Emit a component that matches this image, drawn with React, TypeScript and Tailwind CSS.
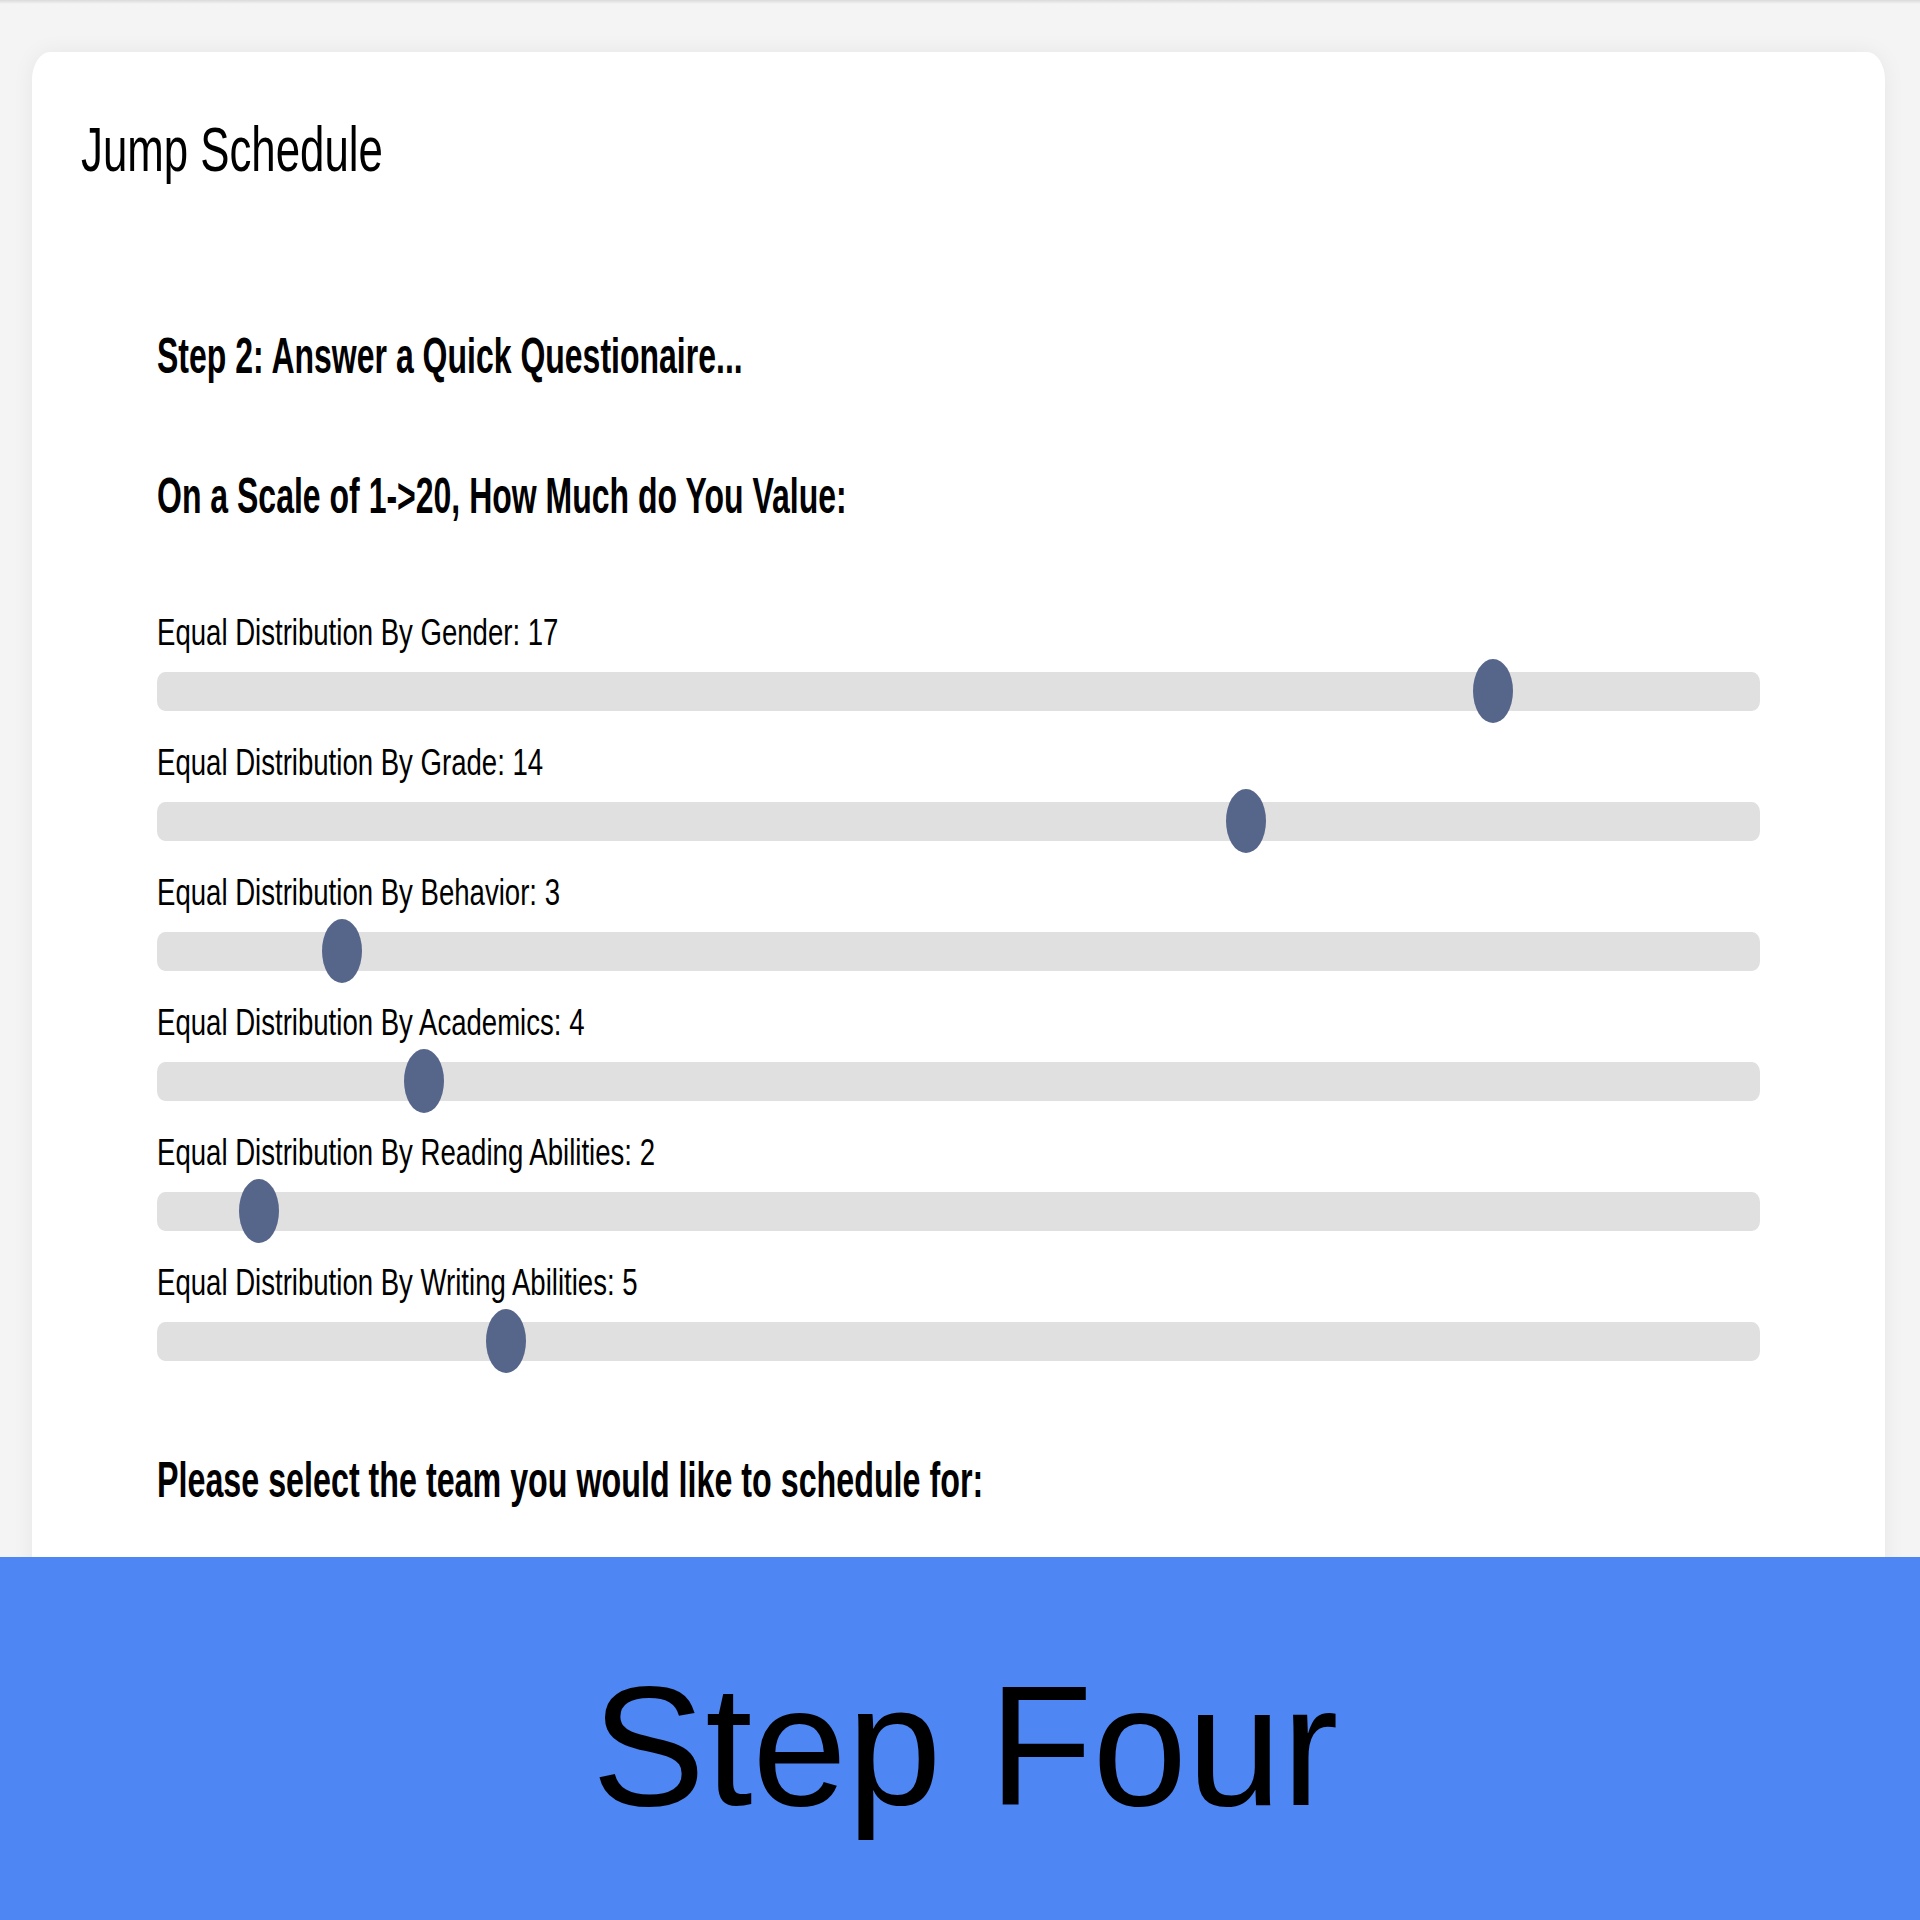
import React from 'react';

const questions = [
  { label: 'Equal Distribution By Gender', value: 17 },
  { label: 'Equal Distribution By Grade', value: 14 },
  { label: 'Equal Distribution By Behavior', value: 3 },
  { label: 'Equal Distribution By Academics', value: 4 },
  { label: 'Equal Distribution By Reading Abilities', value: 2 },
  { label: 'Equal Distribution By Writing Abilities', value: 5 },
];

const MIN = 1;
const MAX = 20;

function SliderRow({ label, value }: { label: string; value: number }) {
  // thumb is 40px wide, track is 1603px wide
  const left = ((value - MIN) / (MAX - MIN)) * (1603 - 40);

  return (
    <div className="flex flex-col">
      <p className="origin-left scale-x-[0.745] whitespace-nowrap text-[37px] leading-[37px] text-black">
        {label}: {value}
      </p>
      <div className="relative mt-[21px] h-[39px] w-full rounded-[8px/10px] bg-[#e0e0e0]">
        <div
          className="absolute top-[-13px] h-[64px] w-[40px] rounded-[50%] bg-[#56658a]"
          style={{ left }}
        />
      </div>
    </div>
  );
}

export default function App() {
  return (
    <div className="flex h-[1920px] w-[1920px] flex-col overflow-hidden bg-[#f4f4f4] font-['Liberation_Sans',Arial,sans-serif]">
      <div className="flex-1 overflow-hidden">
        <div className="h-[4px] bg-linear-to-b from-[#dadada] to-[#f4f4f4]" />
        <div className="ml-[32px] mr-[35px] mt-[48px] min-h-[1700px] rounded-[18px/28px] bg-white px-[49px] pt-[66px] shadow-[0_0_22px_rgba(0,0,0,0.06)]">
          <h1 className="origin-left scale-x-[0.695] whitespace-nowrap text-[63px] leading-[63px] text-black">
            Jump Schedule
          </h1>

          <div className="mt-[150px] px-[76px]">
            <h2 className="origin-left scale-x-[0.64] whitespace-nowrap text-[50px] font-bold leading-[50px] text-black">
              Step 2: Answer a Quick Questionaire...
            </h2>
            <h2 className="mt-[90px] origin-left scale-x-[0.64] whitespace-nowrap text-[50px] font-bold leading-[50px] text-black">
              On a Scale of 1-&gt;20, How Much do You Value:
            </h2>

            <div className="mt-[93px] flex flex-col gap-[33px]">
              {questions.map((q) => (
                <SliderRow key={q.label} label={q.label} value={q.value} />
              ))}
            </div>

            <h2 className="mt-[94px] origin-left scale-x-[0.645] whitespace-nowrap text-[50px] font-bold leading-[50px] text-black">
              Please select the team you would like to schedule for:
            </h2>
          </div>
        </div>
      </div>

      <div className="h-[363px] w-full bg-[#4e87f4] pl-[10px] pt-[104px] text-center">
        <p className="text-[170px] leading-[170px] text-black">Step Four</p>
      </div>
    </div>
  );
}
